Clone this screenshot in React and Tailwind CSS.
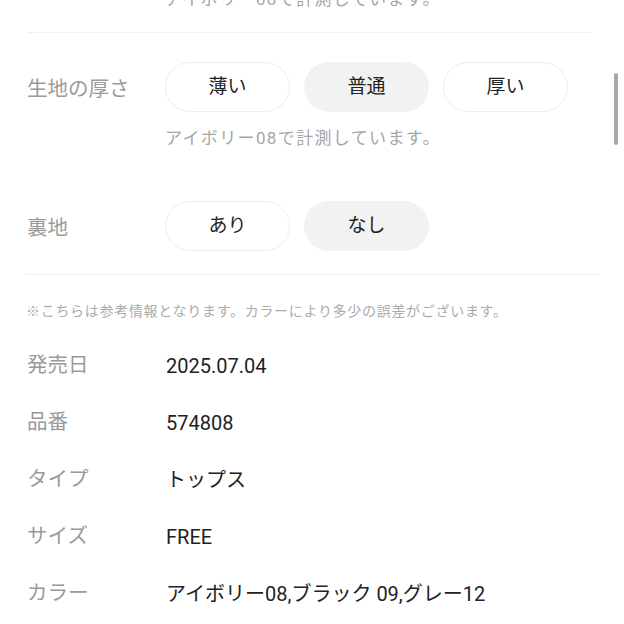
import React from "react";

const FONT = { fontFamily: '"Roboto", "Noto Sans CJK JP", sans-serif' };

function Pill({ children, selected }) {
  return (
    <div
      className={
        "w-[125px] h-[50px] rounded-full flex items-center justify-center text-[19px] text-[#222] " +
        (selected ? "bg-[#f2f2f2]" : "bg-white border border-[#ededed]")
      }
    >
      {children}
    </div>
  );
}

function SpecRow({ label, value }) {
  return (
    <div className="h-[57px] flex items-center pl-[27px]">
      <div className="w-[139px] text-[20.5px] text-[#9a9a9a]">{label}</div>
      <div className="text-[20px] text-[#222]">{value}</div>
    </div>
  );
}

export default function App() {
  return (
    <div
      className="relative w-[624px] h-[624px] overflow-hidden bg-white"
      style={FONT}
    >
      <div className="flex flex-col">
        <div className="-mt-[13px] pl-[165px] h-[24px] leading-[24px] text-[17px] text-[#a6a6a6] tracking-[0.08em]">
          アイボリー08で計測しています。
        </div>
        <div className="mt-[21px] ml-[28px] mr-[32px] h-px bg-[#f0f0f0]" />

        <div className="mt-[29px] flex items-center pl-[27px]">
          <div className="w-[138px] pt-[4px] text-[20.5px] text-[#9a9a9a]">生地の厚さ</div>
          <div className="flex gap-[14px]">
            <Pill>薄い</Pill>
            <Pill selected>普通</Pill>
            <Pill>厚い</Pill>
          </div>
        </div>
        <div className="mt-[14px] pl-[165px] h-[24px] leading-[24px] text-[17px] text-[#a6a6a6] tracking-[0.08em]">
          アイボリー08で計測しています。
        </div>

        <div className="mt-[51px] flex items-center pl-[27px]">
          <div className="w-[138px] pt-[4px] text-[20.5px] text-[#9a9a9a]">裏地</div>
          <div className="flex gap-[14px]">
            <Pill>あり</Pill>
            <Pill selected>なし</Pill>
          </div>
        </div>

        <div className="mt-[23px] ml-[25px] mr-[24px] h-px bg-[#efefef]" />

        <div className="mt-[26px] pl-[26px] h-[20px] leading-[20px] text-[14px] text-[#ababab] tracking-[0.05em]">
          ※こちらは参考情報となります。カラーにより多少の誤差がございます。
        </div>

        <div className="mt-[16px] flex flex-col">
          <SpecRow label="発売日" value="2025.07.04" />
          <SpecRow label="品番" value="574808" />
          <SpecRow label="タイプ" value="トップス" />
          <SpecRow label="サイズ" value="FREE" />
          <SpecRow label="カラー" value="アイボリー08,ブラック 09,グレー12" />
        </div>
      </div>

      <div className="absolute right-[6px] top-[73px] w-[4px] h-[72px] rounded-full bg-[#a8a8a8]" />
    </div>
  );
}
